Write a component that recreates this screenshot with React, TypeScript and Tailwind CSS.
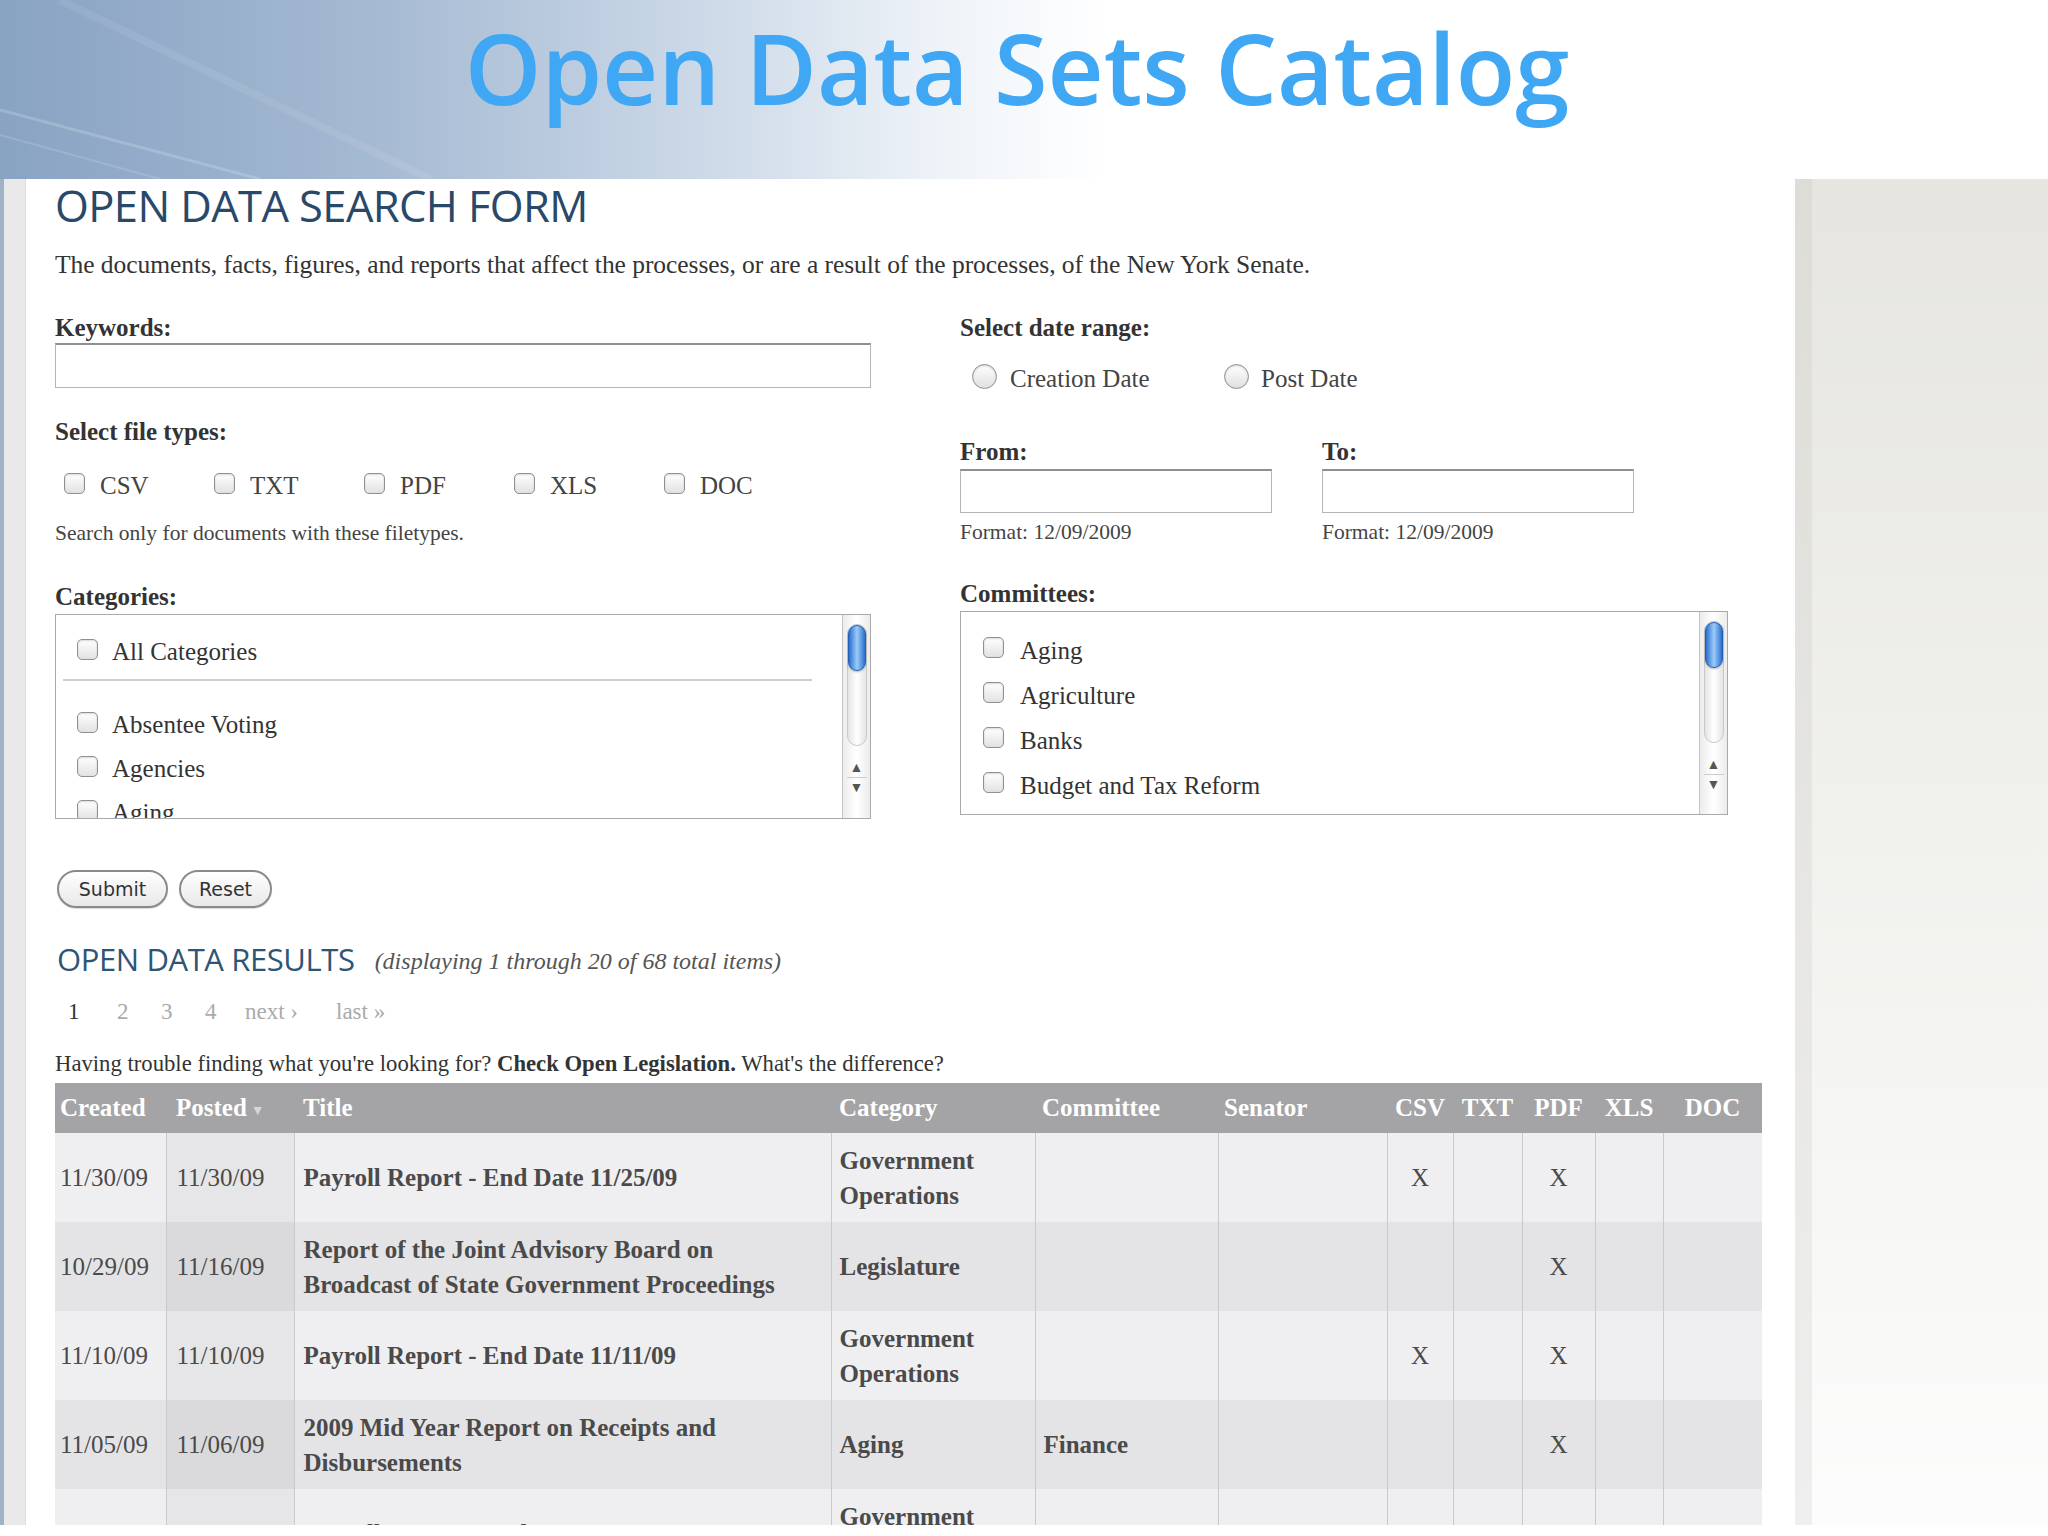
import React from 'react';

const serif = { fontFamily: "'Liberation Serif', 'Times New Roman', serif" };
const sans = { fontFamily: "'Open Sans', 'DejaVu Sans', sans-serif" };
const ui = { fontFamily: "'DejaVu Sans', 'Liberation Sans', sans-serif" };

function Box({ className = '' }: { className?: string }) {
  return (
    <span
      className={`inline-block w-[21px] h-[21px] rounded-[5px] border border-[#909090] bg-gradient-to-b from-white to-[#e2e2e2] shadow-[inset_0_1px_2px_rgba(0,0,0,0.15)] shrink-0 ${className}`}
    />
  );
}

function Radio() {
  return (
    <span className="inline-block w-[25px] h-[25px] rounded-full border border-[#909090] bg-gradient-to-b from-white to-[#e0e0e0] shadow-[inset_0_1px_2px_rgba(0,0,0,0.18)] shrink-0 -translate-y-[3px]" />
  );
}

function Scrollbar() {
  return (
    <div className="w-[28px] h-full border-l border-[#c4c4c4] bg-gradient-to-r from-[#ececec] via-white to-[#ececec] flex flex-col items-center pt-[9px]">
      <div className="w-[20px] h-[122px] rounded-full border border-[#c9c9c9] bg-gradient-to-r from-[#e4e4e4] via-white to-[#e4e4e4] flex flex-col">
        <div className="w-full h-[46px] rounded-full border border-[#1f5fb8] bg-gradient-to-r from-[#2a6fcf] via-[#9ccbf7] to-[#2a6fcf] shadow-[0_1px_2px_rgba(0,0,0,0.3)]" />
      </div>
      <div className="mt-[12px] w-full flex flex-col items-center text-[#555] text-[14px] leading-none">
        <span className="h-[19px] flex items-center">▲</span>
        <span className="w-[20px] border-t border-[#ccc]" />
        <span className="h-[19px] flex items-center">▼</span>
      </div>
    </div>
  );
}

const categories = ['Absentee Voting', 'Agencies', 'Aging'];
const committees = ['Aging', 'Agriculture', 'Banks', 'Budget and Tax Reform', 'Children and Families'];
const fileTypes = ['CSV', 'TXT', 'PDF', 'XLS', 'DOC'];

type Row = {
  created: string;
  posted: string;
  title: string[];
  category: string[];
  committee: string;
  marks: string[];
};

const rows: Row[] = [
  { created: '11/30/09', posted: '11/30/09', title: ['Payroll Report - End Date 11/25/09'], category: ['Government', 'Operations'], committee: '', marks: ['CSV', 'PDF'] },
  { created: '10/29/09', posted: '11/16/09', title: ['Report of the Joint Advisory Board on', 'Broadcast of State Government Proceedings'], category: ['Legislature'], committee: '', marks: ['PDF'] },
  { created: '11/10/09', posted: '11/10/09', title: ['Payroll Report - End Date 11/11/09'], category: ['Government', 'Operations'], committee: '', marks: ['CSV', 'PDF'] },
  { created: '11/05/09', posted: '11/06/09', title: ['2009 Mid Year Report on Receipts and', 'Disbursements'], category: ['Aging'], committee: 'Finance', marks: ['PDF'] },
  { created: '10/28/09', posted: '10/29/09', title: ['Payroll Report - End Date 10/28/09'], category: ['Government', 'Operations'], committee: '', marks: ['CSV', 'PDF'] },
];

const colWidths = [111, 128, 537, 204, 183, 169, 66, 69, 73, 68, 99];

export default function App() {
  return (
    <div className="w-[2048px] h-[1536px] bg-white overflow-hidden">
      <div className="h-[1525px] overflow-hidden flex flex-col">
        {/* Title band */}
        <div className="relative h-[179px] shrink-0 bg-[linear-gradient(90deg,#89a3c3_0%,#a4b9d2_18%,#cbd8e7_34%,#eef3f8_46%,#ffffff_54%)]">
          <svg className="absolute left-0 top-0" width="1000" height="179" viewBox="0 0 1000 179">
            <path d="M0 110 L260 179" stroke="white" strokeOpacity="0.18" strokeWidth="3" />
            <path d="M0 135 L160 179" stroke="white" strokeOpacity="0.14" strokeWidth="2" />
            <path d="M60 0 L430 179" stroke="white" strokeOpacity="0.08" strokeWidth="8" />
          </svg>
          <h1
            className="relative pt-[19px] pr-[14px] text-center text-[97.5px] leading-none font-semibold text-[#3fa7f4]"
            style={sans}
          >
            Open Data Sets Catalog
          </h1>
        </div>

        <div className="flex flex-1 min-h-0">
          {/* left edge */}
          <div className="w-[26px] shrink-0 flex">
            <div className="w-[4px] bg-[#9fb2c8]" />
            <div className="flex-1 bg-[#e9e9e9] border-r border-[#dcdcdc]" />
          </div>

          {/* main content */}
          <div className="flex-1 bg-white pl-[29px] pt-[2px]" style={serif}>
            <h2 className="text-[43.5px] leading-[50px] font-medium text-[#28496a] tracking-[-0.6px]" style={sans}>
              OPEN DATA SEARCH FORM
            </h2>
            <p className="mt-[19px] text-[25.5px] leading-[30px] text-[#333] tracking-[-0.05px]">
              The documents, facts, figures, and reports that affect the processes, or are a result of the processes, of the New York Senate.
            </p>

            <div className="mt-[33px] flex gap-[89px]">
              {/* left column */}
              <div className="w-[816px] flex flex-col">
                <div className="text-[25px] leading-[30px] font-bold text-[#333]">Keywords:</div>
                <div className="h-[45px] border border-[#b5b5b5] border-t-2 border-t-[#8f8f8f] bg-white" />
                <div className="mt-[29px] text-[25px] leading-[30px] font-bold text-[#333]">Select file types:</div>
                <div className="mt-[24px] flex h-[30px] items-center pl-[9px]">
                  {fileTypes.map((t) => (
                    <label key={t} className="w-[150px] flex items-center gap-[15px] text-[25px] text-[#444]">
                      <Box className="-translate-y-[3px]" />
                      {t}
                    </label>
                  ))}
                </div>
                <div className="mt-[20px] text-[21.5px] leading-[24px] text-[#444]">Search only for documents with these filetypes.</div>
                <div className="mt-[37px] text-[25px] leading-[30px] font-bold text-[#333]">Categories:</div>
                <div className="mt-[2px] h-[205px] border border-[#aaa] flex overflow-hidden bg-white">
                  <div className="flex-1 pl-[21px] pt-[15px] pr-[30px]">
                    <div className="h-[44px] flex items-center gap-[14px] text-[25px] text-[#333]">
                      <Box className="-translate-y-[3px]" />
                      All Categories
                    </div>
                    <div className="mt-[5px] -ml-[14px] h-[2px] bg-[#cfcfcf]" />
                    <div className="mt-[22px]">
                      {categories.map((c) => (
                        <div key={c} className="h-[44px] flex items-center gap-[14px] text-[25px] text-[#333]">
                          <Box className="-translate-y-[3px]" />
                          {c}
                        </div>
                      ))}
                    </div>
                  </div>
                  <Scrollbar />
                </div>
              </div>

              {/* right column */}
              <div className="w-[768px] flex flex-col">
                <div className="text-[25px] leading-[30px] font-bold text-[#333]">Select date range:</div>
                <div className="mt-[21px] h-[30px] flex items-center pl-[12px] text-[25px] text-[#444]">
                  <label className="flex items-center gap-[13px] w-[252px]">
                    <Radio />
                    Creation Date
                  </label>
                  <label className="flex items-center gap-[12px]">
                    <Radio />
                    Post Date
                  </label>
                </div>
                <div className="mt-[43px] flex gap-[50px]">
                  {['From:', 'To:'].map((l) => (
                    <div key={l} className="w-[312px] flex flex-col">
                      <div className="text-[25px] leading-[30px] font-bold text-[#333]">{l}</div>
                      <div className="mt-[2px] h-[44px] border border-[#b5b5b5] border-t-2 border-t-[#8f8f8f] bg-white" />
                      <div className="mt-[7px] text-[21.5px] leading-[24px] text-[#444]">Format: 12/09/2009</div>
                    </div>
                  ))}
                </div>
                <div className="mt-[35px] text-[25px] leading-[30px] font-bold text-[#333]">Committees:</div>
                <div className="mt-[2px] h-[204px] border border-[#aaa] flex overflow-hidden bg-white">
                  <div className="flex-1 pl-[22px] pt-[16px]">
                    {committees.map((c) => (
                      <div key={c} className="h-[45px] flex items-center gap-[16px] text-[25px] text-[#333]">
                        <Box className="-translate-y-[3px]" />
                        {c}
                      </div>
                    ))}
                  </div>
                  <Scrollbar />
                </div>
              </div>
            </div>

            {/* buttons */}
            <div className="mt-[51px] pl-[2px] flex gap-[11px]" style={ui}>
              <button className="h-[38px] w-[111px] rounded-full border-2 border-[#8a8a8a] bg-gradient-to-b from-white to-[#e8e8e8] text-[19px] text-[#333] shadow-[0_1px_1px_rgba(0,0,0,0.15)]">
                Submit
              </button>
              <button className="h-[38px] w-[93px] rounded-full border-2 border-[#8a8a8a] bg-gradient-to-b from-white to-[#e8e8e8] text-[19px] text-[#333] shadow-[0_1px_1px_rgba(0,0,0,0.15)]">
                Reset
              </button>
            </div>

            {/* results */}
            <div className="mt-[31px] h-[40px] flex items-center gap-[20px] pl-[2px]">
              <span className="text-[31px] font-medium text-[#2e5575] tracking-[-0.4px]" style={sans}>
                OPEN DATA RESULTS
              </span>
              <span className="italic text-[24px] text-[#555] translate-y-[2px]">
                (displaying 1 through 20 of 68 total items)
              </span>
            </div>

            <div className="mt-[19px] h-[28px] flex items-center text-[23px] text-[#aaa] pl-[13px]">
              <span className="w-[49px] text-[#333]">1</span>
              <span className="w-[44px]">2</span>
              <span className="w-[44px]">3</span>
              <span className="w-[40px]">4</span>
              <span className="w-[91px]">next ›</span>
              <span>last »</span>
            </div>

            <div className="mt-[25px] h-[26px] text-[22.7px] leading-[26px] text-[#333]">
              Having trouble finding what you're looking for? <b>Check Open Legislation.</b> What's the difference?
            </div>

            {/* table */}
            <table className="mt-[6px] w-[1707px] table-fixed border-collapse text-[25px] text-[#4a4a4a]">
              <colgroup>
                {colWidths.map((w, i) => (
                  <col key={i} style={{ width: w }} />
                ))}
              </colgroup>
              <thead>
                <tr className="h-[50px] bg-[#a4a4a6] text-white font-bold">
                  <th className="text-left font-bold pl-[5px]">Created</th>
                  <th className="text-left font-bold pl-[10px]">
                    Posted<span className="text-[14px] text-[#d6d6d6] ml-[4px] align-middle">▼</span>
                  </th>
                  <th className="text-left font-bold pl-[9px]">Title</th>
                  <th className="text-left font-bold pl-[8px]">Category</th>
                  <th className="text-left font-bold pl-[7px]">Committee</th>
                  <th className="text-left font-bold pl-[6px]">Senator</th>
                  {fileTypes.map((t) => (
                    <th key={t} className="text-center font-bold">{t}</th>
                  ))}
                </tr>
              </thead>
              <tbody>
                {rows.map((r, i) => {
                  const odd = i % 2 === 0;
                  const bg = odd ? 'bg-[#efeff1]' : 'bg-[#e4e4e6]';
                  const sortBg = odd ? 'bg-[#e6e6e8]' : 'bg-[#dadadc]';
                  const cell = 'border-l border-[#cacacc] align-middle';
                  return (
                    <tr key={i} className={`h-[89px] ${bg} leading-[35px]`}>
                      <td className="pl-[5px] align-middle">{r.created}</td>
                      <td className={`${cell} ${sortBg} pl-[10px]`}>{r.posted}</td>
                      <td className={`${cell} pl-[9px] font-bold`}>
                        {r.title.map((l) => (
                          <div key={l}>{l}</div>
                        ))}
                      </td>
                      <td className={`${cell} pl-[8px] font-bold`}>
                        {r.category.map((l) => (
                          <div key={l}>{l}</div>
                        ))}
                      </td>
                      <td className={`${cell} pl-[8px] font-bold`}>{r.committee}</td>
                      <td className={cell}></td>
                      {fileTypes.map((t) => (
                        <td key={t} className={`${cell} text-center`}>
                          {r.marks.includes(t) ? 'X' : ''}
                        </td>
                      ))}
                    </tr>
                  );
                })}
              </tbody>
            </table>
          </div>

          {/* right panel */}
          <div className="w-[253px] shrink-0 flex">
            <div className="w-[17px] bg-gradient-to-b from-[#dddcd6] to-[#efefef]" />
            <div className="flex-1 bg-gradient-to-b from-[#e6e5e0] via-[#f1f1ee] to-[#fcfcfc]" />
          </div>
        </div>
      </div>
    </div>
  );
}
